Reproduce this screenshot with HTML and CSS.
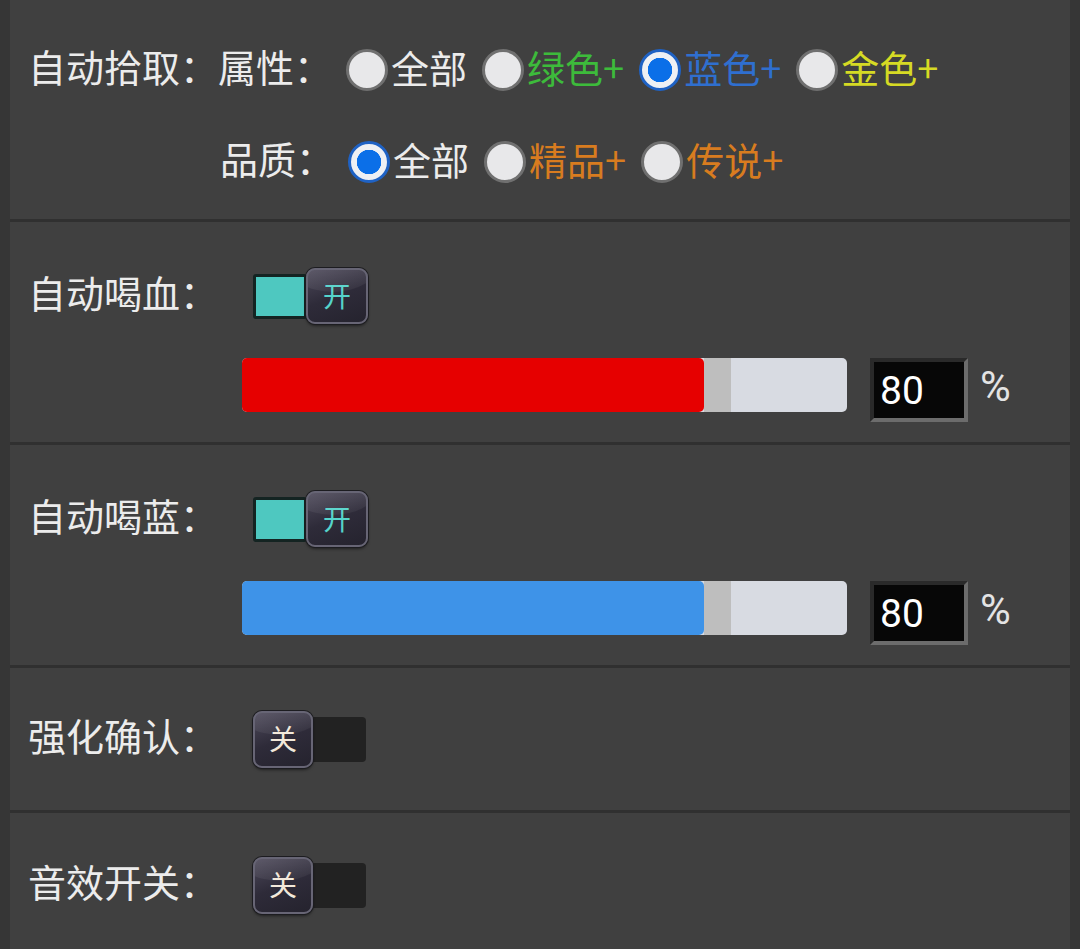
FILE: index.html
```html
<!DOCTYPE html>
<html lang="zh-CN">
<head>
  <meta charset="UTF-8" />
  <meta name="viewport" content="width=device-width, initial-scale=1.0" />
  <title>设置</title>
  <link rel="stylesheet" href="styles.css">
</head>
<body>
  <div class="panel">

    <div class="section pickup">
      <div class="row">
        <span class="label">自动拾取：</span>
        <span class="label">属性：</span>
        <span class="opt"><span class="radio"></span>全部</span>
        <span class="opt green"><span class="radio"></span>绿色+</span>
        <span class="opt blue"><span class="radio on"></span>蓝色+</span>
        <span class="opt gold"><span class="radio"></span>金色+</span>
      </div>
      <div class="row sub">
        <span class="label">品质：</span>
        <span class="opt"><span class="radio on"></span>全部</span>
        <span class="opt orange"><span class="radio"></span>精品+</span>
        <span class="opt orange"><span class="radio"></span>传说+</span>
      </div>
    </div>

    <div class="section potion">
      <div class="row">
        <span class="label wide">自动喝血：</span>
        <div class="toggle on">
          <span class="track"></span>
          <span class="knob">开</span>
        </div>
      </div>
      <div class="bar-row">
        <div class="bar">
          <span class="fill red"></span>
          <span class="thumb"></span>
        </div>
        <div class="num">80</div>
        <span class="pct">%</span>
      </div>
    </div>

    <div class="section potion">
      <div class="row">
        <span class="label wide">自动喝蓝：</span>
        <div class="toggle on">
          <span class="track"></span>
          <span class="knob">开</span>
        </div>
      </div>
      <div class="bar-row">
        <div class="bar">
          <span class="fill blue"></span>
          <span class="thumb"></span>
        </div>
        <div class="num">80</div>
        <span class="pct">%</span>
      </div>
    </div>

    <div class="section simple">
      <div class="row">
        <span class="label wide">强化确认：</span>
        <div class="toggle off">
          <span class="knob">关</span>
          <span class="track"></span>
        </div>
      </div>
    </div>

    <div class="section simple last">
      <div class="row">
        <span class="label wide">音效开关：</span>
        <div class="toggle off">
          <span class="knob">关</span>
          <span class="track"></span>
        </div>
      </div>
    </div>

  </div>
</body>
</html>
```

FILE: styles.css
```css
body {
  margin: 0;
  background: #363636;
  font-family: 'Noto Sans CJK SC', 'Noto Sans', sans-serif;
  color: #ececec;
}

.panel {
  margin: 0 10px;
  background: #404040;
  height: 949px;
}

.section {
  border-bottom: 3px solid #303030;
  padding-left: 18px;
  box-sizing: border-box;
}

.row {
  display: flex;
  align-items: center;
  height: 56px;
}

.label {
  font-size: 38px;
  line-height: 56px;
  padding-bottom: 8px;
  white-space: nowrap;
}

.label.wide {
  width: 225px;
}

/* pickup */
.pickup {
  height: 222px;
  padding-top: 42px;
}

.pickup .label + .label {
  margin-right: 14px;
}

.pickup .sub {
  margin-top: 36px;
  padding-left: 192px;
}

.pickup .sub .label {
  margin-right: 14px;
}

.opt {
  display: flex;
  align-items: center;
  font-size: 38px;
  line-height: 56px;
  padding-bottom: 6px;
  margin-right: 15px;
  white-space: nowrap;
}

.green { color: #3dbb3b; }
.blue { color: #2f6fcf; }
.gold { color: #d6da24; }
.orange { color: #d87c1f; }

.radio {
  width: 42px;
  height: 42px;
  box-sizing: border-box;
  border-radius: 50%;
  border: 3px solid #707070;
  background: #e8e8ea;
  margin-right: 3px;
  margin-top: 6px;
}

.radio.on {
  border-color: #1f62c4;
  background: radial-gradient(circle, #0b6fe8 0 12px, #eef0f4 12.5px);
}

/* potions */
.potion {
  height: 223px;
  padding-top: 46px;
}

.bar-row {
  display: flex;
  align-items: flex-start;
  margin-top: 34px;
  padding-left: 214px;
}

.bar {
  display: flex;
  width: 605px;
  height: 54px;
  border-radius: 5px;
  background: #d8dbe2;
  overflow: hidden;
}

.fill {
  width: 462px;
  border-radius: 0 5px 5px 0;
}

.fill.red { background: #e60000; }
.fill.blue { background: #3e93e8; }

.thumb {
  width: 27px;
  background: #bebebe;
}

.num {
  width: 98px;
  height: 64px;
  box-sizing: border-box;
  margin-left: 23px;
  background: #070707;
  border: 4px solid;
  border-color: #2a2a2a #6c6c6c #6c6c6c #2a2a2a;
  color: #fff;
  font-family: Roboto, 'Noto Sans', sans-serif;
  font-size: 39px;
  line-height: 58px;
  padding-left: 6px;
}

.pct {
  margin-left: 12px;
  font-family: Roboto, 'Noto Sans', sans-serif;
  font-size: 42px;
  line-height: 58px;
  color: #e4e4e4;
}

/* toggles */
.toggle {
  display: flex;
  align-items: center;
  height: 56px;
}

.track {
  height: 45px;
  box-sizing: border-box;
}

.toggle.on .track {
  width: 54px;
  background: #4ec8c0;
  border: 3px solid #142422;
  border-radius: 3px;
  margin-right: -1px;
}

.toggle.off .track {
  width: 53px;
  background: #222;
  border-radius: 0 4px 4px 0;
}

.knob {
  position: relative;
  display: flex;
  align-items: center;
  justify-content: center;
  width: 62px;
  height: 56px;
  box-sizing: border-box;
  padding-bottom: 3px;
  border-radius: 9px;
  border: 2px solid #676575;
  background: linear-gradient(160deg, #4c4859, #2e2b39 50%, #25232e);
  box-shadow: 0 0 0 1px #1c1c20, 0 2px 3px rgba(0, 0, 0, 0.5);
  font-size: 28px;
  overflow: hidden;
}

.knob::before {
  content: '';
  position: absolute;
  left: -20px;
  top: -34px;
  width: 90px;
  height: 56px;
  border-radius: 50%;
  background: linear-gradient(170deg, rgba(255, 255, 255, 0.16), rgba(255, 255, 255, 0.03));
}

.toggle.on .knob {
  color: #55d4cb;
}

.toggle.off .knob {
  width: 60px;
  height: 57px;
  color: #f2e8da;
}

.simple {
  height: 145px;
  padding-top: 43px;
}

.simple.last {
  border-bottom: none;
  height: 136px;
  padding-top: 44px;
}
```
